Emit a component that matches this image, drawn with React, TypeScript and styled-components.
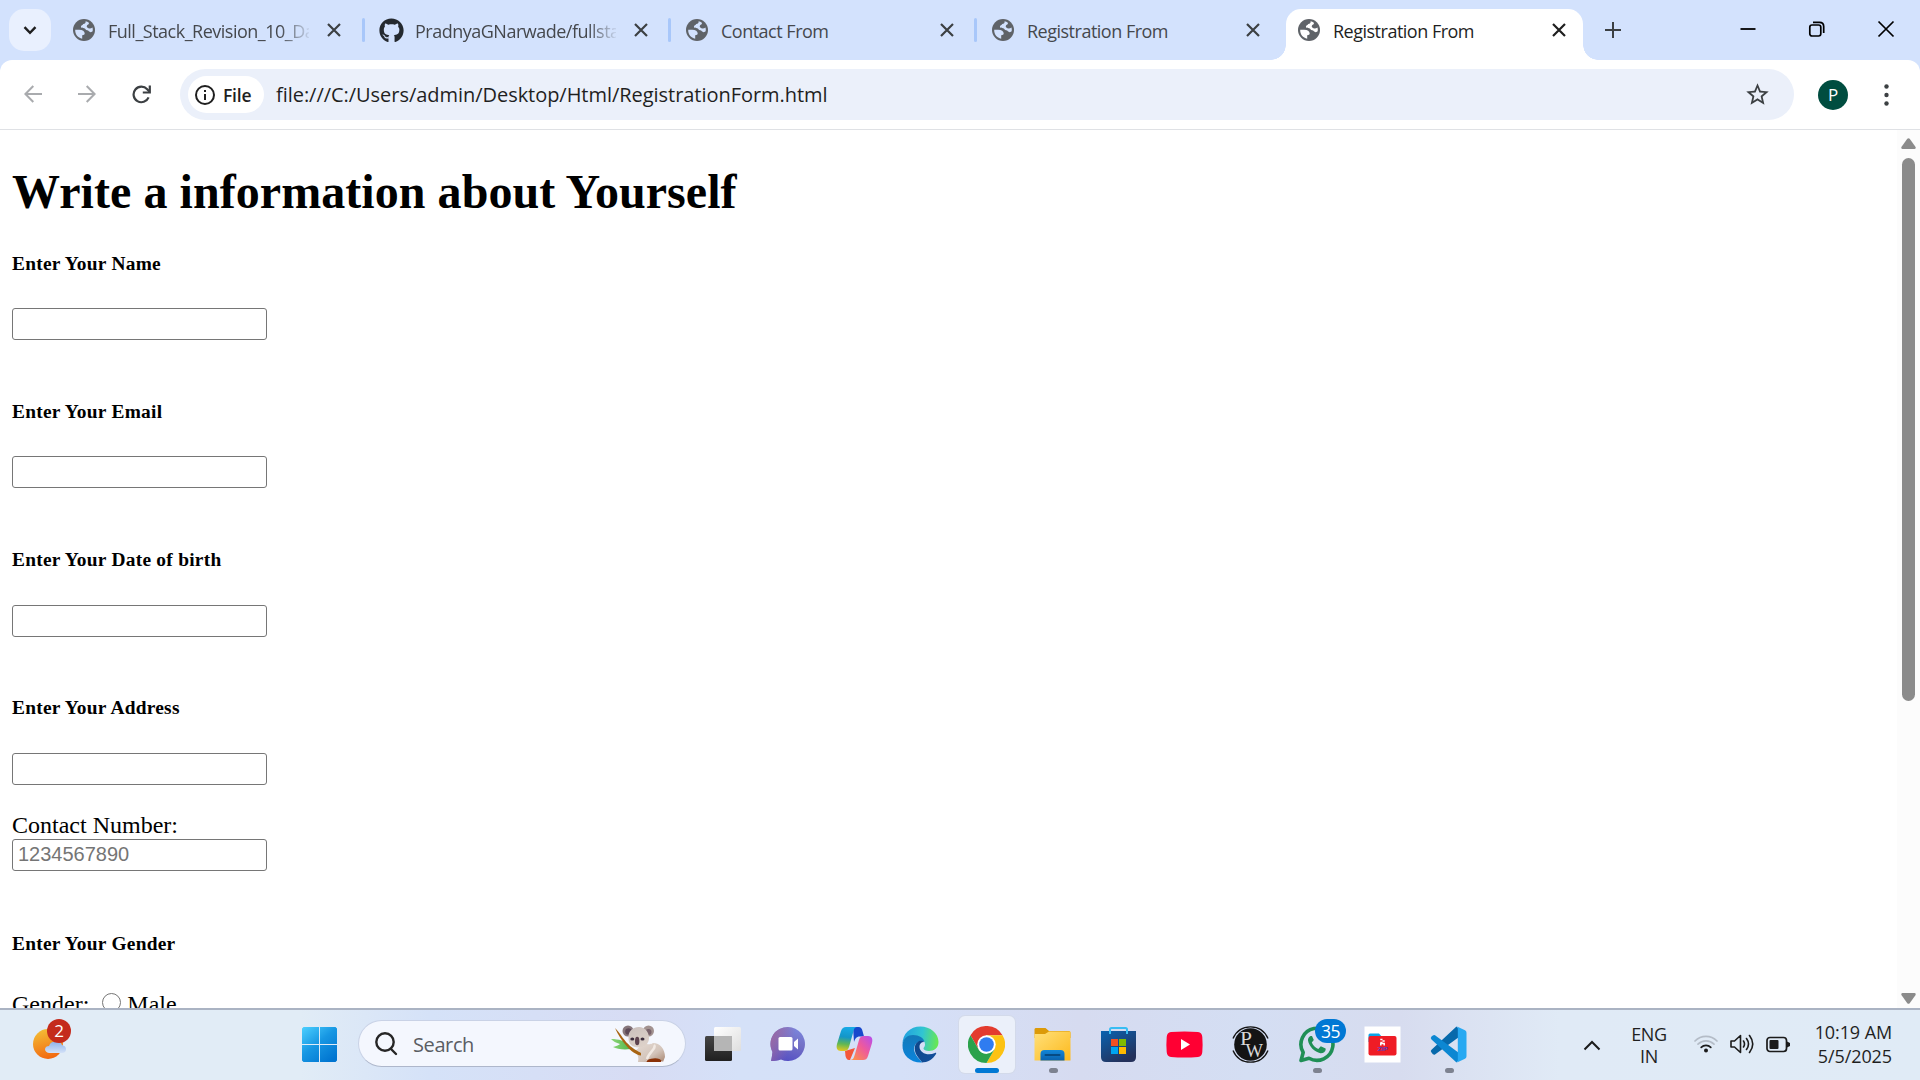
import React from "react";
import styled, { createGlobalStyle } from "styled-components";
import { FaGithub } from "react-icons/fa";
import { MdOutlineStarBorder } from "react-icons/md";

const UI = `"Open Sans", "Noto Sans", sans-serif`;
const SERIF = `"Liberation Serif", "Times New Roman", serif`;

const Global = createGlobalStyle`
  * { box-sizing: border-box; }
  html, body { margin: 0; padding: 0; overflow: hidden; background: #fff; }
  svg { display: block; flex: none; }
`;

const Screen = styled.div`
  width: 1920px;
  height: 1080px;
  display: flex;
  flex-direction: column;
  overflow: hidden;
  background: #fff;
`;

const Label = styled.span<{ $size: number; $ls?: number; $color?: string; $weight?: number; $lh?: number }>`
  font-family: ${UI};
  font-size: ${(p) => p.$size}px;
  letter-spacing: ${(p) => p.$ls ?? 0}px;
  color: ${(p) => p.$color ?? "#1f1f1f"};
  font-weight: ${(p) => p.$weight ?? 400};
  line-height: ${(p) => p.$lh ?? 24}px;
  white-space: nowrap;
`;

/* ---------- Tab strip ---------- */
const TabStrip = styled.div`
  height: 60px;
  flex: none;
  display: flex;
  background: #d3e2fd;
`;
const TabSearch = styled.button`
  width: 42px;
  height: 42px;
  margin: 9px 7px 0 9px;
  padding: 0;
  border: 0;
  border-radius: 15px;
  background: #e9f0fe;
  display: grid;
  place-items: center;
`;
const Tab = styled.div<{ $active?: boolean; $w: number }>`
  position: relative;
  width: ${(p) => p.$w}px;
  height: ${(p) => (p.$active ? 51 : 42)}px;
  margin-top: 9px;
  padding: 0 0 ${(p) => (p.$active ? 9 : 0)}px ${(p) => (p.$active ? 12 : 15)}px;
  display: flex;
  align-items: center;
  background: ${(p) => (p.$active ? "#fff" : "transparent")};
  border-radius: 15px 15px 0 0;
  &::before, &::after {
    content: "";
    display: ${(p) => (p.$active ? "block" : "none")};
    position: absolute;
    bottom: 0;
    width: 15px;
    height: 15px;
  }
  &::before { left: -15px; background: radial-gradient(circle at 0 0, transparent 14.5px, #fff 15px); }
  &::after { right: -15px; background: radial-gradient(circle at 100% 0, transparent 14.5px, #fff 15px); }
`;
const Favicon = styled.div`
  width: 22px;
  flex: none;
  display: flex;
  justify-content: center;
`;
const TabTitle = styled.div<{ $fade?: boolean }>`
  width: 201px;
  margin-left: 13px;
  padding-top: 2px;
  overflow: hidden;
  display: flex;
  mask-image: ${(p) => (p.$fade ? "linear-gradient(90deg, #000 172px, transparent 204px)" : "none")};
`;
const TabClose = styled.div`
  width: 14px;
  margin-left: 18px;
  flex: none;
`;
const TabDivider = styled.div`
  width: 3px;
  height: 24px;
  margin-top: 18px;
  border-radius: 1.5px;
  background: #a8c7fa;
`;
const NewTab = styled.div`
  margin: 22px 0 0 22px;
`;
const WindowControls = styled.div`
  margin: 20px 25px 0 auto;
  display: flex;
  gap: 51px;
`;

/* ---------- Toolbar ---------- */
const ToolbarBack = styled.div`
  flex: none;
  background: #d3e2fd;
`;
const Toolbar = styled.div`
  height: 70px;
  padding: 9px 26px 9px 24px;
  display: flex;
  align-items: center;
  background: #fff;
  border-bottom: 1px solid #dfe1e5;
  border-radius: 12px 12px 0 0;
`;
const NavButtons = styled.div`
  width: 156px;
  display: flex;
  gap: 36px;
`;
const Omnibox = styled.div`
  width: 1614px;
  height: 51px;
  padding: 0 23px 0 8px;
  border-radius: 26px;
  background: #ebf0fa;
  display: flex;
  align-items: center;
`;
const SchemeChip = styled.div`
  width: 76px;
  height: 37px;
  padding-left: 7px;
  border-radius: 19px;
  background: #fff;
  display: flex;
  align-items: center;
  gap: 8px;
`;
const Url = styled.div`
  flex: 1;
  margin-left: 12px;
`;
const Avatar = styled.div`
  width: 30px;
  height: 30px;
  margin: 0 36px 0 24px;
  border-radius: 50%;
  background: #004d40;
  display: grid;
  place-items: center;
`;

/* ---------- Page ---------- */
const Viewport = styled.div`
  height: 878px;
  flex: none;
  display: flex;
  overflow: hidden;
`;
const Page = styled.main`
  flex: 1;
  padding: 0 12px;
  overflow: hidden;
  font-family: ${SERIF};
  color: #000;
`;
const Title = styled.h1`
  margin: 34px 0 31.6px;
  font-size: 48px;
  line-height: 56px;
  letter-spacing: 0.06px;
  white-space: nowrap;
`;
const Group = styled.section<{ $h: number }>`
  height: ${(p) => p.$h}px;
`;
const FieldTitle = styled.h5`
  margin: 0 0 33.4px;
  font-size: 19.4px;
  letter-spacing: 0.26px;
  line-height: 23px;
  white-space: nowrap;
`;
const TextInput = styled.input`
  display: block;
  width: 255px;
  height: 32px;
  padding: 1px 5px;
  border: 1px solid #767676;
  border-radius: 3px;
  background: #fff;
  font: 20px "Liberation Sans", Arial, sans-serif;
  &::placeholder { color: #757575; opacity: 1; }
`;
const Line = styled.label<{ $mt?: number }>`
  display: flex;
  align-items: center;
  margin-top: ${(p) => p.$mt ?? 0}px;
  font-size: 24px;
  line-height: 27px;
  white-space: nowrap;
`;
const Radio = styled.span`
  width: 19px;
  height: 19px;
  margin: 0 6px 4px 13px;
  border: 1.5px solid #767676;
  border-radius: 50%;
`;
const ScrollTrack = styled.div`
  width: 23px;
  padding: 7.5px 4px 4px 4px;
  display: flex;
  flex-direction: column;
  align-items: center;
  background: #fcfcfc;
`;
const ScrollThumb = styled.div`
  width: 13px;
  height: 543px;
  margin: 9px 0 auto;
  border-radius: 7px;
  background: #8b8b8b;
`;

/* ---------- Taskbar ---------- */
const Taskbar = styled.footer`
  height: 72px;
  flex: none;
  display: flex;
  border-top: 2px solid #aab3c3;
  background: linear-gradient(90deg, #e1ecf6 0, #e1ecf6 300px, #d5e2f8 430px, #d7dcf4 640px, #d5e1f8 740px, #d5e0f8 900px, #d6dbf0 1080px, #d4def3 1250px, #d7dcef 1400px, #e0eaf6 1560px, #e0ebf6 1920px);
`;
const Weather = styled.div`
  position: relative;
  width: 42px;
  height: 42px;
  margin: 8px 0 0 32px;
`;
const Badge = styled.div<{ $w: number; $x: number; $y: number; $bg: string }>`
  position: absolute;
  left: ${(p) => p.$x}px;
  top: ${(p) => p.$y}px;
  width: ${(p) => p.$w}px;
  height: 24px;
  border-radius: 12px;
  background: ${(p) => p.$bg};
  display: grid;
  place-items: center;
`;
const Start = styled.div`
  margin: 17px 0 0 228px;
`;
const SearchBox = styled.div`
  width: 328px;
  height: 47px;
  margin: 10px 4px 0 21px;
  padding: 0 19px 0 15px;
  border: 1.5px solid #c9d2e6;
  border-bottom-color: #aeb7cb;
  border-radius: 24px;
  background: #f4f7fe;
  display: flex;
  align-items: center;
`;
const SearchText = styled.div`
  flex: 1;
  margin-left: 15px;
  padding-top: 2px;
`;
const App66 = styled.div`
  width: 66px;
  height: 70px;
  flex: none;
  display: flex;
  flex-direction: column;
  align-items: center;
`;
const IconPlate = styled.div<{ $active?: boolean }>`
  position: relative;
  width: 56px;
  height: 57px;
  margin-top: 6px;
  padding: 10px 9px;
  border-radius: 6px;
  background: ${(p) => (p.$active ? "#ebf0fa" : "transparent")};
  box-shadow: ${(p) => (p.$active ? "0 0 0 1px #d3daea" : "none")};
`;
const Running = styled.div<{ $active?: boolean }>`
  width: ${(p) => (p.$active ? 24 : 9)}px;
  height: 5px;
  margin-top: -5px;
  border-radius: 3px;
  background: ${(p) => (p.$active ? "#0078d4" : "#7d8290")};
  position: relative;
`;
const Tray = styled.div`
  margin-left: auto;
  padding-right: 28px;
  display: flex;
  align-items: center;
`;
const Stack = styled.div<{ $align: string; $w: number; $ml: number; $pb?: number }>`
  width: ${(p) => p.$w}px;
  margin-left: ${(p) => p.$ml}px;
  padding-bottom: ${(p) => p.$pb ?? 0}px;
  display: flex;
  flex-direction: column;
  align-items: ${(p) => p.$align};
`;
const TrayIcons = styled.div`
  display: flex;
  align-items: center;
  gap: 12px;
  margin-left: 25px;
  padding-bottom: 2px;
`;

/* ---------- Icons ---------- */
const Globe = ({ bg = "#d3e2fd" }: { bg?: string }) => (
  <svg width="22" height="22" viewBox="0 0 22 22">
    <circle cx="11" cy="11" r="11" fill="#5f6368" />
    <path
      fill={bg}
      d="M12.600 2.300C12.800 4 11.900 4.900 10.200 4.900C9.900 6.200 8 6.100 7.900 7.700C7.900 9.300 9.700 8.900 11.200 9.200C12.800 9.700 12.600 11.200 14.100 11.300C15.700 11.300 16 13.100 17.600 13.200C18.700 13.200 19.300 12.700 19.700 12.100C19.900 10.700 19.800 9.700 19.500 8.600C17.700 9.900 15.400 9.700 14.300 8.600C13.300 7.600 13.700 6.100 15.200 5.500C15.800 5.200 16 4.500 15.900 3.700C14.900 3 13.700 2.500 12.600 2.300Z M2.200 10.800H6.200C9.500 10.800 11.700 12.200 11.700 14.600C11.700 15.800 10.700 16.200 9.200 16.200V19.700C5 18.900 2 15.400 2.200 10.800Z"
    />
  </svg>
);
const Cross = ({ s = 12, w = 2, c = "#3c4043" }: { s?: number; w?: number; c?: string }) => (
  <svg width={s} height={s} viewBox={`0 0 ${s} ${s}`} stroke={c} strokeWidth={w}>
    <path d={`M1 1L${s - 1} ${s - 1}M${s - 1} 1L1 ${s - 1}`} />
  </svg>
);
const Arrow = ({ flip }: { flip?: boolean }) => (
  <svg width="18" height="18" viewBox="0 0 18 18" fill="none" stroke="#a9abae" strokeWidth="2" transform={flip ? "scale(-1 1)" : undefined}>
    <path d="M9.300 1L1.400 9L9.300 17M1.400 9H18" />
  </svg>
);
const Reload = () => (
  <svg width="19" height="19" viewBox="0 0 19 19" fill="none" stroke="#3c4043" strokeWidth="2.200">
    <path d="M16.600 12.400A7.800 7.800 0 1 1 15.200 4.200L17.600 6.800" />
    <path d="M17.800 0.500V7.500H10.800" />
  </svg>
);
const Info = () => (
  <svg width="20" height="20" viewBox="0 0 20 20" fill="none" stroke="#1f1f1f" strokeWidth="2">
    <circle cx="10" cy="10" r="9" />
    <path d="M10 9V15M10 5V7" />
  </svg>
);
const Koala = () => (
  <svg width="55" height="38" viewBox="0 0 55 38">
    <defs>
      <linearGradient id="fur" x1="0" y1="0" x2="1" y2="1">
        <stop offset="0" stopColor="#e6dcd5" />
        <stop offset=".6" stopColor="#d3c4ba" />
        <stop offset="1" stopColor="#a98772" />
      </linearGradient>
      <linearGradient id="head" x1="0" y1="0" x2=".5" y2="1">
        <stop offset="0" stopColor="#c9bfbc" />
        <stop offset="1" stopColor="#ddd1c9" />
      </linearGradient>
      <linearGradient id="leaf" x1="0" y1="0" x2="1" y2="0">
        <stop offset="0" stopColor="#8fd67a" />
        <stop offset="1" stopColor="#4fb649" />
      </linearGradient>
    </defs>
    <path d="M35 37L39 32L52 33L50 37Z" fill="#8a3208" />
    <path d="M0 14C8 14 14 16 18 20L20 24C12 25 6 24 2 22C6 21 8 20 9 19C5 18 2 16 0 14Z" fill="url(#leaf)" />
    <path d="M32 19C34 17 38 21 42 18C49 18 54 24 54 32L52 37C48 32 42 33 36 35L35 37H27C28 33 27 29 24 26Z" fill="url(#fur)" />
    <path d="M43 20C46 23 38 27 36 34" fill="none" stroke="#f1e9e3" strokeWidth="2.500" />
    <circle cx="17" cy="6" r="5.500" fill="#86767b" />
    <circle cx="17.500" cy="6.500" r="3.300" fill="#5d4a58" />
    <circle cx="37.500" cy="6" r="5.500" fill="#a29290" />
    <circle cx="37.500" cy="7" r="3" fill="#77616a" />
    <path d="M17.500 13C17 6 22 2 28 2C34 2 38 7 38 13C38 19 33 22.500 27.500 22.500C21 22.500 17.500 19 17.500 13Z" fill="url(#head)" />
    <path d="M4 3C9 8 14 17 19 21C24 25 27 26 30 28V30.500C25 30 20 26 16 21.500C11 16 7 10 4 3Z" fill="#a86412" />
    <ellipse cx="21.300" cy="14" rx="2" ry="1.600" fill="#3b2d3d" />
    <ellipse cx="31.500" cy="14" rx="2" ry="1.600" fill="#3b2d3d" />
    <ellipse cx="26.200" cy="16" rx="2.200" ry="4.300" fill="#5e4450" />
  </svg>
);
const WinLogo = () => (
  <svg width="35" height="35" viewBox="0 0 35 35">
    <defs>
      <linearGradient id="win" gradientUnits="userSpaceOnUse" x1="0" y1="0" x2="28" y2="35">
        <stop offset="0" stopColor="#4cd0ff" />
        <stop offset=".5" stopColor="#1797e3" />
        <stop offset="1" stopColor="#0074d0" />
      </linearGradient>
    </defs>
    <path fill="url(#win)" d="M1.500 0H17V17H0V1.500ZM18 0H33.500L35 1.500V17H18ZM0 18H17V35H1.500L0 33.500ZM18 18H35V33.500L33.500 35H18Z" />
  </svg>
);
const TaskView = () => (
  <svg width="37" height="37" viewBox="0 0 37 37">
    <defs>
      <linearGradient id="tv" x1="0" y1="0" x2="0" y2="1"><stop offset="0" stopColor="#454545" /><stop offset="1" stopColor="#202020" /></linearGradient>
      <linearGradient id="tw" x1="0" y1="0" x2="1" y2="1"><stop offset="0" stopColor="#fff" /><stop offset="1" stopColor="#dedede" /></linearGradient>
    </defs>
    <rect x="1" y="10" width="27" height="25" rx="1.500" fill="url(#tv)" />
    <rect x="10" y="1" width="27" height="24" rx="1.500" fill="url(#tw)" />
    <path d="M10 10H28V25H10Z" fill="#b5b5b5" />
  </svg>
);
const Chat = () => (
  <svg width="37" height="37" viewBox="0 0 37 37">
    <defs>
      <linearGradient id="ch" x1=".7" y1="0" x2=".4" y2="1"><stop offset="0" stopColor="#7b86dd" /><stop offset=".45" stopColor="#7471c6" /><stop offset="1" stopColor="#5550c4" /></linearGradient>
      <linearGradient id="ch2" x1="0" y1=".3" x2=".6" y2=".5"><stop offset="0" stopColor="#9a68a4" /><stop offset="1" stopColor="#9a68a4" stopOpacity="0" /></linearGradient>
    </defs>
    <path d="M18 1A17 17 0 1 1 11 33.500C8 35 4 35 1 35C2 31 2 29 2.500 26A17 17 0 0 1 18 1Z" fill="url(#ch)" />
    <path d="M18 1A17 17 0 1 1 11 33.500C8 35 4 35 1 35C2 31 2 29 2.500 26A17 17 0 0 1 18 1Z" fill="url(#ch2)" />
    <rect x="8.500" y="11" width="14" height="13.500" rx="1.500" fill="#fff" />
    <path d="M24 16L28 12.500V23.500L24 20Z" fill="#fff" />
  </svg>
);
const Copilot = () => (
  <svg width="37" height="37" viewBox="0 0 37 37">
    <defs>
      <linearGradient id="c1" x1="0.3" y1="0" x2="0.2" y2="1"><stop offset="0" stopColor="#18a9e6" /><stop offset=".4" stopColor="#1496c8" /><stop offset=".7" stopColor="#61b754" /><stop offset="1" stopColor="#e8c91e" /></linearGradient>
      <linearGradient id="c2" x1="1" y1="0" x2="0" y2="1"><stop offset="0" stopColor="#b44df0" /><stop offset=".45" stopColor="#ee5a9c" /><stop offset="1" stopColor="#ff9a3c" /></linearGradient>
    </defs>
    <path d="M17 1H22.500C25 1 26 3 26.500 5L28 10.500H24C20 10.500 19 13 18 16Z" fill="#1748cc" />
    <path d="M9 25L19 22L14 34H13C11 34 10 32 9.500 30Z" fill="#f4573a" />
    <path d="M10 1H21C18 1 17.500 5 17 7L13 21C12 24 10.500 25 8 25H5C1 25 0 22 1 18L5 5C6 2.500 7.500 1 10 1Z" fill="url(#c1)" />
    <path d="M27 34H14C17.500 34 18 31 19 28L23 14C24 11 25 10 28 10H32C36 10 37 13 36 17L32 30C31 33 29.500 34 27 34Z" fill="url(#c2)" />
  </svg>
);
const Edge = () => (
  <svg width="37" height="37" viewBox="0 0 37 37">
    <defs>
      <linearGradient id="e1" x1="0" y1=".3" x2="1" y2=".4"><stop offset="0" stopColor="#219fe0" /><stop offset=".55" stopColor="#31c5d2" /><stop offset="1" stopColor="#68e852" /></linearGradient>
      <linearGradient id="e2" x1="0" y1="0" x2="0" y2="1"><stop offset="0" stopColor="#1479b8" /><stop offset="1" stopColor="#0a84dc" /></linearGradient>
      <linearGradient id="e3" x1="0" y1="0" x2="1" y2="1"><stop offset="0" stopColor="#0d4587" /><stop offset="1" stopColor="#124f9d" /></linearGradient>
    </defs>
    <path d="M.5 18C.5 8 8 .5 18.500 .5C28 .5 36.500 7 36.500 16C36.500 22 32 25 27 25C24 25 21.500 24 21.500 22.500C21.500 21.500 23 21 23 18.500C23 13 17 10 11 10C5 10 1.500 14 .5 18Z" fill="url(#e1)" />
    <path d="M.5 19C1 12 6 9 11 9C17 9 22 12 22.500 16C15 13 9 21 14 29C17 34 22 36.500 19 36.500C8 36.500 0 29 .5 19Z" fill="url(#e2)" />
    <path d="M17 15C12 18 12 23 14 28C17 34 22 36.500 19 36.500C26 36.500 31 33 34 28C34.500 27 34 26.500 33 27C26 30 18 27.500 17.500 21C17.300 18 19 16 22 16C20.500 14.500 19 14.500 17 15Z" fill="url(#e3)" />
  </svg>
);
const Chrome = () => (
  <svg width="37" height="37" viewBox="0 0 48 48">
    <path d="M3.200 12A24 24 0 0 1 44.800 12H24L13.600 30Z" fill="#e33b2e" />
    <path d="M24 12H44.800A24 24 0 0 1 24 48L34.400 30Z" fill="#fcc212" />
    <path d="M3.200 12L13.600 30A12 12 0 0 0 24 36L34.400 30L24 48A24 24 0 0 1 3.200 12Z" fill="#2ba24c" />
    <circle cx="24" cy="24" r="12" fill="#fff" />
    <circle cx="24" cy="24" r="9.500" fill="#2f7cf0" />
  </svg>
);
const Explorer = () => (
  <svg width="37" height="37" viewBox="0 0 37 37">
    <defs>
      <linearGradient id="fo" x1="0" y1="0" x2="1" y2="1"><stop offset="0" stopColor="#ffe07a" /><stop offset="1" stopColor="#fdb91c" /></linearGradient>
      <linearGradient id="fb" x1="0" y1="0" x2="0" y2="1"><stop offset="0" stopColor="#1286d8" /><stop offset="1" stopColor="#0a62ae" /></linearGradient>
    </defs>
    <path d="M1.500 2H11.500L15 5H35.500L36.500 6.500V12H.5V3Z" fill="#dc9a08" />
    <path d="M.5 8H11L15 5.500H36.500V34.500H.5Z" fill="url(#fo)" />
    <path d="M6.500 34.500V28Q6.500 24 10.500 24H26.500Q30.500 24 30.500 28V34.500Z" fill="url(#fb)" />
    <path d="M11.500 29H25.500" stroke="#064a83" strokeWidth="2" strokeLinecap="round" />
  </svg>
);
const Store = () => (
  <svg width="37" height="37" viewBox="0 0 37 37">
    <defs>
      <linearGradient id="st" x1="0" y1="0" x2=".6" y2="1"><stop offset="0" stopColor="#0a62b0" /><stop offset="1" stopColor="#24315b" /></linearGradient>
    </defs>
    <path d="M1 5H36V31Q36 36 31 36H6Q1 36 1 31Z" fill="url(#st)" />
    <path d="M10 8V3.500Q10 2 11.500 2H25.500Q27 2 27 3.500V8" fill="none" stroke="#38bdf3" strokeWidth="2" />
    <path d="M11 13H18V20H11Z" fill="#f25022" />
    <path d="M19 13H26V20H19Z" fill="#7fba00" />
    <path d="M11 21H18V28H11Z" fill="#00a4ef" />
    <path d="M19 21H26V28H19Z" fill="#ffb900" />
  </svg>
);
const YouTube = () => (
  <svg width="37" height="37" viewBox="0 0 37 37">
    <path d="M5 6Q18.500 4.800 32 6Q36 6.500 36.300 11Q36.900 18.500 36.300 26Q36 30.500 32 31Q18.500 32.200 5 31Q1 30.500 .7 26Q.1 18.500 .7 11Q1 6.500 5 6Z" fill="#ff0033" />
    <path d="M15 13L24 18.500L15 24Z" fill="#fff" />
  </svg>
);
const PhysicsWallah = () => (
  <svg width="37" height="37" viewBox="0 0 37 37">
    <circle cx="18.500" cy="18.500" r="16.300" fill="#141414" />
    <path d="M1 12.500Q6 .8 18.500 .8Q31 .8 36 12.500M1 24.500Q6 36.200 18.500 36.200Q31 36.200 36 24.500" fill="none" stroke="#141414" strokeWidth="1.300" />
    <text x="8" y="19" fontFamily="Liberation Serif, serif" fontSize="19" textLength="12" lengthAdjust="spacingAndGlyphs" fill="#d8d8d8">P</text>
    <text x="13.500" y="31" fontFamily="Liberation Serif, serif" fontSize="18" textLength="17.500" lengthAdjust="spacingAndGlyphs" fill="#d8d8d8">W</text>
  </svg>
);
const WhatsApp = () => (
  <svg width="37" height="37" viewBox="0 0 37 37">
    <path d="M3 34.500L5.200 26.500A16 16 0 1 1 11 32.200Z" fill="none" stroke="#1f8f56" strokeWidth="3.600" strokeLinejoin="round" />
    <path d="M12.500 10C11 10.500 9.800 12.500 10 14.500C11 20.500 16.500 26 22.500 27.300C25 27.500 27.500 26 27.700 23.500L27.600 22.600L22.800 20.300L20.300 23C17 21.500 15 19.500 13.800 16.500L15.800 14L14 10Z" fill="#1f8f56" />
  </svg>
);
const Zip = () => (
  <svg width="37" height="37" viewBox="0 0 37 37">
    <path d="M.5 .5H36.500V36.500H.5Z" fill="#fff" />
    <path d="M4.500 9Q4.500 7.500 6 7.500H15L18 11V16H4.500Z" fill="#0aa3e8" />
    <rect x="4.500" y="10" width="28" height="19.500" rx="2" fill="#ef1c25" />
    <path d="M16.300 13.500H18.500M18.500 15H20.700M16.300 16.500H18.500" stroke="#fff" strokeWidth="1.300" />
    <path d="M16.800 19.500V17.500H20.200V19.500" stroke="#fff" strokeWidth="1.500" fill="none" />
    <text x="13.500" y="25" fontFamily="Liberation Sans, sans-serif" fontWeight="700" fontSize="6" textLength="10.500" lengthAdjust="spacingAndGlyphs" fill="#5b3fc0">ZIP</text>
  </svg>
);
const VSCode = () => (
  <svg width="37" height="37" viewBox="0 0 37 37">
    <path d="M1.500 26.500Q0 25 1.500 23.700L26.500 .5L29 3V11L5 28.500Q3.500 29.500 1.500 26.500Z" fill="#0769ab" />
    <path d="M1.500 10.600Q3.500 8.500 5 9.300L29 27V34L26.500 36.500L1.500 13.500Q0 12 1.500 10.600Z" fill="#0c87d2" />
    <path d="M27 .5L35 4.200Q36.500 5 36.500 6.800V30.200Q36.500 32 35 32.800L27 36.500Q27.800 36 27.800 34V3Q27.800 1.500 27 .5Z" fill="#27a9f2" />
  </svg>
);

type TabData = { title: string; width: number; divider?: boolean; fade?: boolean; active?: boolean; github?: boolean };
const tabs: TabData[] = [
  { title: "Full_Stack_Revision_10_Da", width: 304, fade: true, divider: true },
  { title: "PradnyaGNarwade/fullsta", width: 303, fade: true, github: true, divider: true },
  { title: "Contact From", width: 303, divider: true },
  { title: "Registration From", width: 309 },
  { title: "Registration From", width: 297, active: true },
];

type AppData = { icon: React.ReactNode; state?: "running" | "active"; badge?: string };
const apps: AppData[] = [
  { icon: <TaskView /> },
  { icon: <Chat /> },
  { icon: <Copilot /> },
  { icon: <Edge /> },
  { icon: <Chrome />, state: "active" },
  { icon: <Explorer />, state: "running" },
  { icon: <Store /> },
  { icon: <YouTube /> },
  { icon: <PhysicsWallah /> },
  { icon: <WhatsApp />, state: "running", badge: "35" },
  { icon: <Zip /> },
  { icon: <VSCode />, state: "running" },
];

const fields = [
  { title: "Enter Your Name", height: 148.3 },
  { title: "Enter Your Email", height: 148.3 },
  { title: "Enter Your Date of birth", height: 148.3 },
  { title: "Enter Your Address", height: 115.1 },
];

function TabRow() {
  return (
    <>
      {tabs.map((t, i) => (
        <React.Fragment key={i}>
          <Tab $active={t.active} $w={t.width}>
            <Favicon>{t.github ? <FaGithub size={25} color="#24292f" /> : <Globe bg={t.active ? "#fff" : undefined} />}</Favicon>
            <TabTitle $fade={t.fade}>
              <Label $size={18} $ls={-0.5} $color={t.active ? "#1f1f1f" : "#45484d"}>{t.title}</Label>
            </TabTitle>
            <TabClose><Cross s={14} w={2.2} c={t.active ? "#1f1f1f" : "#3c4043"} /></TabClose>
          </Tab>
          {t.divider && <TabDivider />}
        </React.Fragment>
      ))}
    </>
  );
}

export default function App() {
  return (
    <Screen>
      <Global />
      <TabStrip>
        <TabSearch>
          <svg width="14" height="9" viewBox="0 0 14 9" fill="none" stroke="#1f1f1f" strokeWidth="2.400">
            <path d="M1.500 1.200L7 6.800L12.500 1.200" />
          </svg>
        </TabSearch>
        <TabRow />
        <NewTab>
          <svg width="16" height="16" viewBox="0 0 16 16" stroke="#3c4043" strokeWidth="2">
            <path d="M8 0V16M0 8H16" />
          </svg>
        </NewTab>
        <WindowControls>
          <svg width="18" height="18" viewBox="0 0 18 18" stroke="#000" strokeWidth="1.800"><path d="M1.500 9H16.500" /></svg>
          <svg width="18" height="18" viewBox="0 0 18 18" fill="none" stroke="#000" strokeWidth="1.700">
            <rect x="1.800" y="5" width="11" height="11" rx="2.200" />
            <path d="M5 2.300H11.500Q15.700 2.300 15.700 6.500V13" />
          </svg>
          <svg width="18" height="18" viewBox="0 0 18 18" stroke="#000" strokeWidth="1.700"><path d="M1.500 1.500L16.500 16.500M16.500 1.500L1.500 16.500" /></svg>
        </WindowControls>
      </TabStrip>

      <ToolbarBack>
        <Toolbar>
          <NavButtons>
            <Arrow />
            <Arrow flip />
            <Reload />
          </NavButtons>
          <Omnibox>
            <SchemeChip>
              <Info />
              <Label $size={17.5} $weight={600} $ls={-0.2}>File</Label>
            </SchemeChip>
            <Url>
              <Label $size={20} $ls={-0.04}>file:///C:/Users/admin/Desktop/Html/RegistrationForm.html</Label>
            </Url>
            <MdOutlineStarBorder size={27} color="#3c4043" />
          </Omnibox>
          <Avatar>
            <Label $size={17} $color="#fff">P</Label>
          </Avatar>
          <svg width="5" height="22" viewBox="0 0 5 22" fill="#3c4043">
            <circle cx="2.500" cy="2.500" r="2.200" />
            <circle cx="2.500" cy="11" r="2.200" />
            <circle cx="2.500" cy="19.500" r="2.200" />
          </svg>
        </Toolbar>
      </ToolbarBack>

      <Viewport>
        <Page>
          <Title>Write a information about Yourself</Title>
          {fields.map((f) => (
            <Group key={f.title} $h={f.height}>
              <FieldTitle>{f.title}</FieldTitle>
              <TextInput type="text" />
            </Group>
          ))}
          <Group $h={120}>
            <Line>Contact Number:</Line>
            <TextInput type="text" placeholder="1234567890" />
          </Group>
          <FieldTitle>Enter Your Gender</FieldTitle>
          <Line $mt={36}>
            Gender: <Radio /> Male
          </Line>
        </Page>
        <ScrollTrack>
          <svg width="15" height="11" viewBox="0 0 15 11" fill="#8b8b8b"><path d="M6.300 .8Q7.500 -.4 8.700 .8L14.600 9Q15 11 13.500 11H1.500Q0 11 .4 9Z" /></svg>
          <ScrollThumb />
          <svg width="15" height="11" viewBox="0 0 15 11" fill="#8b8b8b"><path d="M6.300 10.200Q7.500 11.400 8.700 10.200L14.600 2Q15 0 13.500 0H1.500Q0 0 .4 2Z" /></svg>
        </ScrollTrack>
      </Viewport>

      <Taskbar>
        <Weather>
          <svg width="36" height="42" viewBox="0 0 36 42">
            <defs>
              <linearGradient id="sun" x1=".3" y1="0" x2=".6" y2="1"><stop offset="0" stopColor="#f3bd35" /><stop offset="1" stopColor="#f2660f" /></linearGradient>
              <linearGradient id="cl" x1="0" y1="0" x2="0" y2="1"><stop offset="0" stopColor="#8fb4ea" /><stop offset="1" stopColor="#d3e1f8" /></linearGradient>
            </defs>
            <circle cx="16" cy="26" r="15" fill="url(#sun)" />
            <path d="M17 35Q13 34 13 31Q13.500 28 17 28Q19 23 24 24Q28 23 30 27Q34 28 34 31Q34 35 30 35Z" fill="url(#cl)" />
          </svg>
          <Badge $w={24} $x={15} $y={0.5} $bg="#c42b1c"><Label $size={17} $color="#fff">2</Label></Badge>
        </Weather>
        <Start><WinLogo /></Start>
        <SearchBox>
          <svg width="24" height="24" viewBox="0 0 24 24" fill="none" stroke="#262626" strokeWidth="2.400" strokeLinecap="round">
            <circle cx="11" cy="10" r="8.700" />
            <path d="M17 17L22 22" />
          </svg>
          <SearchText><Label $size={20} $ls={-0.4} $color="#5a5d63">Search</Label></SearchText>
          <Koala />
        </SearchBox>
        {apps.map((a, i) => (
          <App66 key={i}>
            <IconPlate $active={a.state === "active"}>
              {a.icon}
              {a.badge && (
                <Badge $w={31} $x={26} $y={3} $bg="#0078d4"><Label $size={17.5} $ls={-0.6} $color="#fff">{a.badge}</Label></Badge>
              )}
            </IconPlate>
            {a.state && <Running $active={a.state === "active"} />}
          </App66>
        ))}
        <Tray>
          <svg width="18" height="11" viewBox="0 0 18 11" fill="none" stroke="#1b1b1b" strokeWidth="2"><path d="M1.500 9.500L9 2L16.500 9.500" /></svg>
          <Stack $align="center" $w={40} $ml={28}>
            <Label $size={18} $ls={-0.4} $lh={22.5}>ENG</Label>
            <Label $size={18} $ls={-0.4} $lh={22.5}>IN</Label>
          </Stack>
          <TrayIcons>
            <svg width="24" height="20" viewBox="0 0 24 20" fill="none" strokeWidth="1.700" strokeLinecap="round">
              <path d="M1 7A15.500 15.500 0 0 1 23 7M4 10.200A11.300 11.300 0 0 1 20 10.200" stroke="#b4bcc7" />
              <path d="M7.200 13.400A6.800 6.800 0 0 1 16.800 13.400" stroke="#1b1b1b" />
              <circle cx="12" cy="16.500" r="2" fill="#1b1b1b" />
            </svg>
            <svg width="24" height="22" viewBox="0 0 24 22" fill="none" stroke="#1b1b1b" strokeWidth="1.600" strokeLinejoin="round" strokeLinecap="round">
              <path d="M1 8H4.500L10.500 2.500V19.500L4.500 14H1Z" />
              <path d="M13.500 8Q15.500 11 13.500 14M16.500 5.500Q20.500 11 16.500 16.500M19.500 2.500Q26 11 19.500 19.500" />
            </svg>
            <svg width="24" height="17" viewBox="0 0 24 17">
              <rect x="1" y="1.500" width="19.500" height="14" rx="3" fill="none" stroke="#1b1b1b" strokeWidth="1.700" />
              <rect x="3.500" y="4" width="9" height="9" rx="1" fill="#1b1b1b" />
              <path d="M21 5.500L24 7V10L21 11.500Z" fill="#1b1b1b" />
            </svg>
          </TrayIcons>
          <Stack $align="flex-end" $w={90} $ml={12} $pb={3}>
            <Label $size={18} $ls={-0.1} $lh={24}>10:19 AM</Label>
            <Label $size={18} $ls={-0.1} $lh={24}>5/5/2025</Label>
          </Stack>
        </Tray>
      </Taskbar>
    </Screen>
  );
}
